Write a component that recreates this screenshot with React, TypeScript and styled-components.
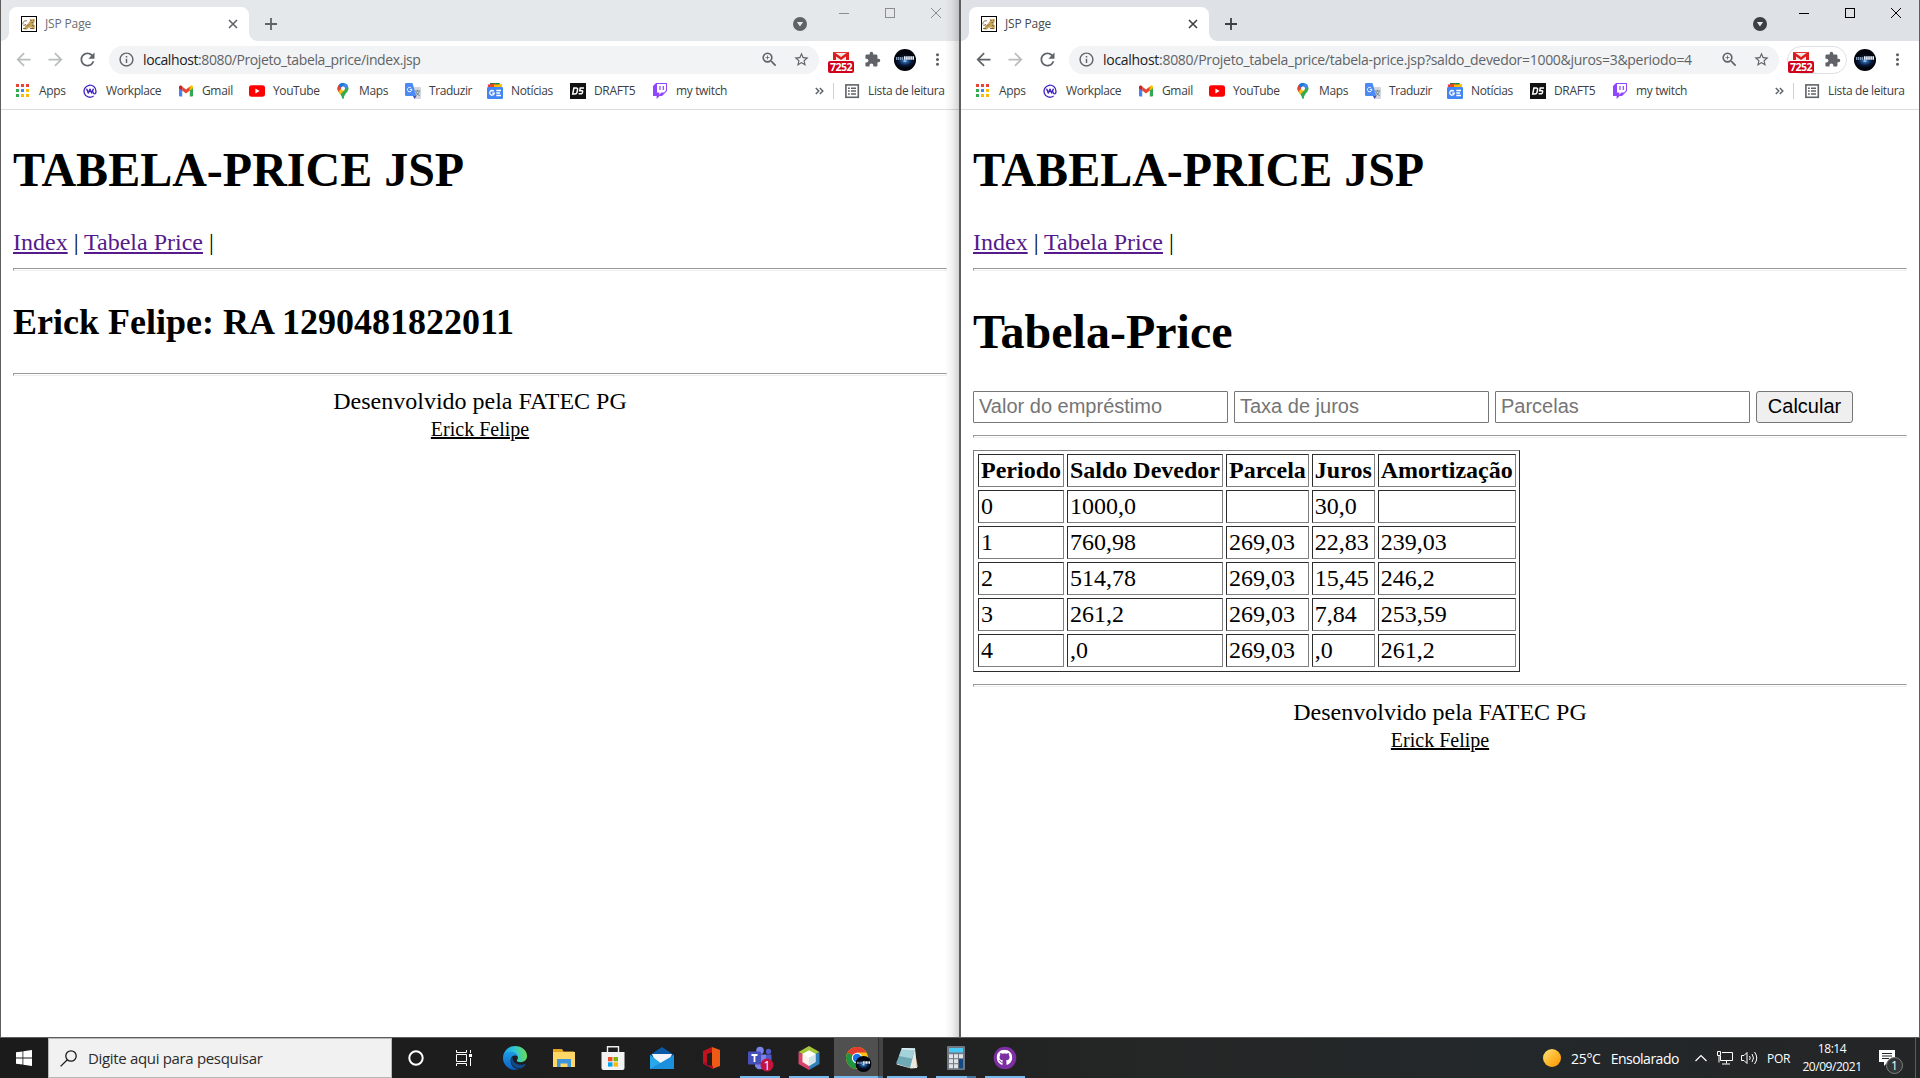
import React from 'react';
import styled, { createGlobalStyle } from 'styled-components';
import {
  MdArrowBack, MdArrowForward, MdRefresh, MdInfoOutline, MdZoomIn,
  MdStarBorder, MdExtension, MdMoreVert,
} from 'react-icons/md';
import { FaGithub } from 'react-icons/fa';

const Global = createGlobalStyle`
  * { box-sizing: border-box; }
  body { margin: 0; background: #fff; overflow: hidden; }
`;

const ui = `'Open Sans', 'Noto Sans', sans-serif`;

const Desktop = styled.div`
  width: 1920px;
  height: 1078px;
  display: grid;
  grid-template-rows: 1038px 40px;
  background: #1f1f1f;
`;
const Windows = styled.div`
  display: grid;
  grid-template-columns: 960px 960px;
`;
const Window = styled.section<{ $active: boolean }>`
  position: relative;
  display: flex;
  flex-direction: column;
  background: #fff;
  border: 1px solid #5e5e5e;
  border-top: 0;
  &::after {
    content: '';
    display: ${p => (p.$active ? 'none' : 'block')};
    position: absolute;
    top: 0;
    right: 0;
    width: 14px;
    height: 100%;
    background: linear-gradient(to right, rgba(0,0,0,0), rgba(0,0,0,.05) 50%, rgba(0,0,0,.17));
  }
`;

/* ---------- tab strip ---------- */
const TabStrip = styled.div<{ $active: boolean }>`
  display: flex;
  height: 41px;
  padding-left: 8px;
  background: ${p => (p.$active ? '#dee1e6' : '#e5e8eb')};
  color: ${p => (p.$active ? '#3c4043' : '#5f6368')};
`;
const Tab = styled.div`
  position: relative;
  display: flex;
  align-items: center;
  width: 240px;
  height: 34px;
  margin-top: 7px;
  padding: 0 8px 0 12px;
  border-radius: 8px 8px 0 0;
  background: #fff;
  &::before, &::after {
    content: '';
    position: absolute;
    bottom: 0;
    width: 8px;
    height: 8px;
  }
  &::before { left: -8px; background: radial-gradient(circle at 0 0, transparent 7.5px, #fff 8px); }
  &::after { right: -8px; background: radial-gradient(circle at 100% 0, transparent 7.5px, #fff 8px); }
`;
const TabTitle = styled.span<{ $active: boolean }>`
  flex: 1;
  margin-left: 8px;
  font: 12px/16px ${ui};
  letter-spacing: -0.15px;
  color: ${p => (p.$active ? '#45494d' : '#696d71')};
`;
const CloseBox = styled.span`
  display: flex;
  width: 16px;
  justify-content: center;
`;
const NewTab = styled.span`
  display: flex;
  align-items: center;
  justify-content: center;
  width: 28px;
  height: 34px;
  margin: 7px auto 0 8px;
`;
const SearchTabs = styled.span`
  margin: 17px 14px 0 0;
  width: 14px;
  height: 14px;
  svg { display: block; }
`;
const Caption = styled.div<{ $active: boolean }>`
  display: flex;
  height: 26px;
  color: ${p => (p.$active ? '#000' : '#8b8d8f')};
  svg { width: 46px; height: 26px; }
`;

/* ---------- toolbar ---------- */
const Toolbar = styled.div`
  display: flex;
  align-items: center;
  height: 37px;
  padding: 0 6px;
  color: #5f6368;
`;
const ToolButton = styled.span<{ $dim?: boolean }>`
  display: flex;
  align-items: center;
  justify-content: center;
  width: 32px;
  height: 28px;
  color: ${p => (p.$dim ? '#babcbe' : '#5f6368')};
  svg { flex: none; }
`;
const Omnibox = styled.div`
  display: flex;
  align-items: center;
  width: 710px;
  height: 28px;
  margin-left: 6px;
  padding: 0 2px 0 9px;
  border-radius: 14px;
  background: #f1f3f4;
`;
const Url = styled.span<{ $spacing: number }>`
  flex: 1;
  margin-left: 8px;
  font: 14px/20px ${ui};
  letter-spacing: ${p => p.$spacing}px;
  white-space: nowrap;
  color: #5f6368;
  b { font-weight: 400; color: #202124; }
`;
const Extensions = styled.div<{ $active: boolean }>`
  display: flex;
  align-items: center;
  gap: 4px;
  width: 60px;
  height: 28px;
  margin: 0 2px 0 8px;
  border: 1px solid ${p => (p.$active ? '#dfe1e5' : 'transparent')};
  border-radius: 14px;
`;
const MailExt = styled.span`
  display: flex;
  flex: none;
  flex-direction: column;
  align-items: center;
  gap: 1px;
  width: 26px;
  height: 22px;
  margin-top: 6px;
  svg { display: block; flex: none; }
`;
const Count = styled.span`
  width: 26px;
  height: 12px;
  border-radius: 2px;
  background: #d0021b;
  color: #fff;
  font: 700 10.5px/12px ${ui};
  letter-spacing: -0.5px;
  text-align: center;
`;

/* ---------- bookmarks ---------- */
const Bookmarks = styled.div`
  display: flex;
  height: 32px;
  padding: 5px 0 0 14px;
  border-bottom: 1px solid #dadce0;
`;
const Bookmark = styled.span<{ $w: number; $gap?: number }>`
  display: flex;
  align-items: center;
  width: ${p => p.$w}px;
  height: 16px;
  gap: ${p => p.$gap ?? 8}px;
  svg { flex: none; }
`;
const Label = styled.span<{ $s?: number }>`
  font: 12px/16px ${ui};
  letter-spacing: ${p => p.$s ?? -0.35}px;
  white-space: nowrap;
  color: #3c4043;
`;
const Divider = styled.span`
  width: 1px;
  height: 16px;
  margin-right: 10px;
  background: #cfd1d4;
`;

/* ---------- page ---------- */
const Page = styled.main`
  flex: 1;
  padding: 0 12px;
  font: 24px/27px 'Liberation Serif', 'Times New Roman', serif;
  color: #000;
`;
const H1 = styled.h1<{ $top?: number }>`
  margin: ${p => p.$top ?? 32}px 0 32px;
  font-size: 48px;
  line-height: 55px;
`;
const H2 = styled.h2`
  margin: 31px 0 30px;
  font-size: 36px;
  line-height: 41px;
`;
const Nav = styled.nav`
  a { color: #551a8b; text-decoration: underline; }
`;
const Rule = styled.hr`
  height: 3px;
  margin: 12px 0;
  border: 1px solid;
  border-color: #9a9a9a #eee #eee #9a9a9a;
`;
const Form = styled.form`
  display: flex;
  gap: 6px;
`;
const Field = styled.input`
  width: 255px;
  height: 32px;
  padding: 1px 4px 2px 5px;
  border: 1px solid #767676;
  border-radius: 1px;
  font: 20px 'Liberation Sans', Arial, sans-serif;
  &::placeholder { color: #757575; }
`;
const Submit = styled.button`
  width: 97px;
  height: 32px;
  padding: 0 0 1px;
  border: 1px solid #767676;
  border-radius: 3px;
  background: #efefef;
  color: #000;
  font: 20px 'Liberation Sans', Arial, sans-serif;
`;
const Table = styled.table`
  padding: 0 0 1px 1px;
  border: 1px solid;
  border-color: #808080 #2c2c2c #2c2c2c #808080;
  border-spacing: 3px;
  th, td {
    height: 33px;
    padding: 2px;
    border: 1px solid;
    border-color: #2c2c2c #808080 #808080 #2c2c2c;
    text-align: left;
  }
`;
const Footer = styled.footer`
  text-align: center;
`;
const Author = styled.div`
  font-size: 20px;
  line-height: 28px;
  text-decoration: underline;
`;

/* ---------- taskbar ---------- */
const Taskbar = styled.div`
  display: flex;
  background: linear-gradient(to right, #1b1b1b, #1f1f1f 45%, #252626 60%, #23282a 78%, #242526);
  color: #fff;
`;
const Start = styled.div`
  display: flex;
  align-items: center;
  justify-content: center;
  width: 48px;
`;
const Search = styled.div`
  display: flex;
  align-items: center;
  width: 344px;
  padding-left: 11px;
  border: 1px solid #b8b8b8;
  background: #f1f1f1;
`;
const SearchText = styled.span`
  margin-left: 11px;
  font: 15px/20px ${ui};
  letter-spacing: -0.33px;
  color: #2b2b2b;
`;
const SysButton = styled.div`
  display: flex;
  align-items: center;
  justify-content: center;
  width: 48px;
`;
const Apps = styled.div`
  display: flex;
  margin-left: 2.5px;
`;
const TaskApp = styled.div<{ $active?: boolean; $line?: 'one' | 'stack' | 'wide' }>`
  display: flex;
  flex-direction: column;
  align-items: center;
  width: 49px;
  padding-top: 8px;
  gap: 6px;
  background: ${p => (p.$active ? 'linear-gradient(to right, #505050 44px, #2f2f2f 44px, #2f2f2f 45px, #444 45px)' : 'none')};
  > svg { flex: none; display: block; overflow: visible; }
  &::after {
    content: '';
    width: ${p => (p.$line === 'wide' ? '49px' : '40px')};
    height: 2px;
    background: ${p => (!p.$line ? 'none' : p.$line === 'stack' ? 'linear-gradient(to right, #76b9ed 31px, #47759a 31px)' : p.$line === 'wide' ? 'linear-gradient(to right, #76b9ed 44px, #47759a 44px)' : '#76b9ed')};
  }
`;
const Tray = styled.div`
  display: flex;
  align-items: center;
  margin-left: auto;
`;
const Weather = styled.div`
  display: flex;
  align-items: center;
  width: 152px;
  gap: 10px;
`;
const TrayText = styled.span<{ $size?: number; $s?: number }>`
  padding-top: 1px;
  font: ${p => p.$size ?? 14}px/20px ${ui};
  letter-spacing: ${p => p.$s ?? 0}px;
  white-space: nowrap;
`;
const Sun = styled.span`
  width: 18px;
  height: 18px;
  border-radius: 50%;
  background: linear-gradient(135deg, #ffe680, #ffb92e 50%, #ff9300);
`;
const TrayIcon = styled.span<{ $w: number }>`
  display: flex;
  width: ${p => p.$w}px;
  svg { display: block; }
`;
const Clock = styled.div`
  width: 90px;
  text-align: center;
  font: 12px/18px ${ui};
  letter-spacing: -0.45px;
`;
const Notices = styled.div`
  width: 38px;
  padding-top: 4px;
  svg { display: block; }
`;
const ShowDesktop = styled.div`
  width: 5px;
  height: 40px;
  border-left: 1px solid #5b5d5e;
`;

/* ---------- drawings ---------- */
const Tomcat = () => (
  <svg width="16" height="16" viewBox="0 0 16 16">
    <rect x=".5" y=".5" width="15" height="15" fill="#fff" stroke="#000" />
    <path d="M3 13.500L4 10l3-2.500L9 5l-.3-2.500 1.300.8h2l1.500-.8.300 3L12.500 8l1.500 1.500-.5 3.500-2 .3-1-1.800-3 .2-1.500 1.800z" fill="#c9a45a" />
    <path d="M2 8.500C1.500 5.500 4 4 6 5M2.500 9.500L5 8.500M2 12.500h3M6 10.500l2-2M9.500 4.500h1M12 4.500h.8M10.500 6.500h1.500M9 12.500h4M11 9l2 1.500" stroke="#6c5a3a" strokeWidth=".9" fill="none" />
  </svg>
);
const AppsGrid = () => {
  const c = ['#ea4335', '#ea4335', '#ea4335', '#34a853', '#4285f4', '#fbbc04', '#34a853', '#fbbc04', '#fbbc04'];
  return (
    <svg width="16" height="16" viewBox="0 0 16 16" shapeRendering="crispEdges">
      {c.map((f, i) => <rect key={i} x={1 + (i % 3) * 5} y={1 + Math.floor(i / 3) * 5} width="3" height="3" fill={f} />)}
    </svg>
  );
};
const Workplace = () => (
  <svg width="16" height="16" viewBox="0 0 16 16" fill="none" stroke="#4326c4" strokeLinecap="round" strokeLinejoin="round">
    <path d="M11.200 13.300A6 6 0 1 1 14 8.200c0 1.800-.6 2.600-1.600 2.600s-1.200-1-1.700-2.300" strokeWidth="1.300" />
    <path d="M4.800 6.200l1.500 3.800L8 6.200l1.700 3.800 1.500-3.800" strokeWidth="1.500" />
  </svg>
);
const Gmail = () => (
  <svg width="16" height="16" viewBox="0 0 16 16">
    <path d="M1 4v8.500a1 1 0 0 0 1 1h2.200V7.200z" fill="#4285f4" />
    <path d="M15 4v8.500a1 1 0 0 1-1 1h-2.200V7.200z" fill="#34a853" />
    <path d="M11.800 3.600v4L15 5.200V4c0-1.400-1.500-2-2.500-1.200z" fill="#fbbc04" />
    <path d="M4.200 7.600V3.500L8 6.400l3.800-2.900v4.100L8 10.500z" fill="#ea4335" />
    <path d="M1 4v1.200l3.200 2.400v-4l-.7-.8C2.500 2 1 2.600 1 4z" fill="#c5221f" />
  </svg>
);
const YouTube = () => (
  <svg width="16" height="16" viewBox="0 0 16 16">
    <rect x="0" y="2.300" width="16" height="11.400" rx="2.600" fill="#f00" />
    <path d="M6.400 5.600v4.900l4.200-2.450z" fill="#fff" />
  </svg>
);
const Maps = () => (
  <svg width="16" height="16" viewBox="0 0 16 16">
    <path d="M8 0a5.500 5.500 0 0 1 5.500 5.500c0 3.500-4.200 5-4.800 10-.1.700-1.300.7-1.400 0C6.700 11.500 2.500 9 2.500 5.500A5.500 5.500 0 0 1 8 0z" fill="#34a853" />
    <path d="M3.800 2A5.500 5.500 0 0 0 3.500 8.700L8 3.500z" fill="#ea4335" />
    <path d="M3.800 2A5.500 5.500 0 0 1 9.700.3L6 5z" fill="#1a73e8" />
    <path d="M9.700.3a5.500 5.500 0 0 1 3.200 2.700L9.500 7 8 3.400z" fill="#4285f4" />
    <path d="M3.500 8.700l3-3.500L9.800 7l-4.600 4.500z" fill="#fbbc04" />
    <circle cx="8" cy="5.500" r="2" fill="#fff" />
  </svg>
);
const Translate = () => (
  <svg width="16" height="16" viewBox="0 0 16 16">
    <path d="M7 4h8a1 1 0 0 1 1 1v10a1 1 0 0 1-1 1H9.500z" fill="#d5d7da" />
    <path d="M10 8h5M12.500 6.800V8M11 8.500c.5 2 2 3.500 3.800 4M14.200 8.500c-.5 2-2 3.500-3.400 4" stroke="#607d8b" strokeWidth=".9" fill="none" />
    <path d="M8 13h3.500L9.500 16z" fill="#3a57b8" />
    <path d="M1 0h6.500l3.800 13H1a1 1 0 0 1-1-1V1a1 1 0 0 1 1-1z" fill="#4c8bf5" />
    <path d="M6.300 5.200a2.200 2.200 0 1 0 .5 1.400H4.800" stroke="#fff" strokeWidth="1" fill="none" />
  </svg>
);
const News = () => (
  <svg width="16" height="16" viewBox="0 0 16 16">
    <path d="M3 0h9.500l1 4H3z" fill="#188038" />
    <path d="M.8 1.500l8-1 1 4H1z" fill="#ea4335" />
    <path d="M7 1.800L15 .9 14.800 5H7z" fill="#fbbc04" />
    <rect x="0" y="4" width="16" height="12" rx="1.200" fill="#4285f4" />
    <path d="M6.800 8.300a2.300 2.300 0 1 0 .5 1.900H5.200M9.300 7.500H14M9.300 10H13M9.300 12.500H14" stroke="#fff" strokeWidth="1.300" fill="none" />
  </svg>
);
const Draft5 = () => (
  <svg width="16" height="16" viewBox="0 0 16 16">
    <rect width="16" height="16" fill="#121212" />
    <path d="M3.900 5h2.300q1.700 0 1.300 1.800l-.5 2.500Q6.600 11 4.900 11H2.700zM14 5h-3.700l-.6 2.800h2.400q.7 0 .5 1.100-.2 1.800-1 1.800H8.600" stroke="#fff" strokeWidth="1.500" fill="none" />
  </svg>
);
const Twitch = () => (
  <svg width="16" height="16" viewBox="0 0 16 16">
    <path d="M4 0L1 3v10h3.600v3l3-3H10l5-5V0z" fill="#9146ff" />
    <path d="M5 1h9v6.500L12 9.600H9.400L7.300 11.700V9.600H5z" fill="#fff" />
    <path d="M8 3v4M11.300 3v4" stroke="#9146ff" strokeWidth="1.200" />
  </svg>
);
const ReadingList = () => (
  <svg width="16" height="16" viewBox="0 0 16 16">
    <rect x="1.900" y="1.900" width="12.400" height="12.400" fill="none" stroke="#5f6368" strokeWidth="1.600" />
    <path d="M4 5.200h1.800M4 8h1.800M4 10.900h1.800M7 5.200h5M7 8h5M7 10.900h5" stroke="#5f6368" strokeWidth="1.500" />
  </svg>
);
const Chevrons = () => (
  <svg width="9" height="16" viewBox="0 0 9 16">
    <path d="M.8 5l3 3-3 3M4.800 5l3 3-3 3" fill="none" stroke="#5f6368" strokeWidth="1.500" />
  </svg>
);
const RedMail = () => (
  <svg width="16" height="8" viewBox="0 0 16 8">
    <rect width="16" height="8" fill="#f3e9e9" />
    <path d="M0 1h2.500L8 5l5.500-4H16v7h-3V4.500L8 8 3 4.500V8H0z" fill="#dd1c1c" />
    <path d="M0 0h16v1H0z" fill="#e23a3a" />
  </svg>
);
const Avatar = ({ size = 22 }: { size?: number }) => (
  <svg width={size} height={size} viewBox="0 0 22 22">
    <defs>
      <radialGradient id="glow">
        <stop offset="0" stopColor="#cfe9ff" /><stop offset=".22" stopColor="#2863a8" />
        <stop offset=".6" stopColor="#0a1c40" /><stop offset="1" stopColor="#02040b" />
      </radialGradient>
    </defs>
    <circle cx="11" cy="11" r="11" fill="#02040b" />
    <ellipse cx="11" cy="12" rx="10.500" ry="7" fill="url(#glow)" />
    <path d="M2 9.500h7" stroke="#7f96b5" strokeWidth="3" strokeDasharray="1.300 .6" />
    <path d="M10 9h10" stroke="#f0f6ff" strokeWidth="3.400" strokeDasharray="1.600 .5" />
  </svg>
);

const Edge = () => (
  <svg width="24" height="24" viewBox="0 0 24 24">
    <defs>
      <linearGradient id="e1" x1="0" y1=".5" x2="1" y2=".4"><stop offset="0" stopColor="#1b9de2" /><stop offset=".5" stopColor="#2fc4d8" /><stop offset="1" stopColor="#6be04c" /></linearGradient>
      <linearGradient id="e2" x1="0" y1="0" x2="0" y2="1"><stop offset="0" stopColor="#1e9ce6" /><stop offset="1" stopColor="#0d5fc0" /></linearGradient>
    </defs>
    <path d="M0 11C1 4 6 0 12 0c7 0 12 4.500 12 10 0 4-3 6.200-6.500 6.200-3 0-4.500-1.200-3.200-2.700 1.500-2 .2-5.500-4.300-5.500C5 6 1 8 0 11z" fill="url(#e1)" />
    <path d="M0 12C0 8 3.500 5.800 7.500 5.800c4 0 7 2 7.300 5C13 8.500 8 9 7.600 14c-.3 5 3.400 9.500 8.400 9C8 26 0 20 0 12z" fill="url(#e2)" />
    <path d="M9.500 10.500C6 13 8 22 16.500 22.500c3 0 5-2 6-4 .3-.6-.2-.9-.8-.6-5 2.500-12.700-.4-12.200-7.400z" fill="#114a8b" />
  </svg>
);
const Explorer = () => (
  <svg width="24" height="24" viewBox="0 0 24 24">
    <path d="M1 3h9l1.500 2.500H22V20H1z" fill="#e6a520" />
    <path d="M1 6h22v15H1z" fill="#ffd767" />
    <path d="M5 13h14v8h-3.500v-3.500h-7V21H5z" fill="#3c95dc" />
  </svg>
);
const Store = () => (
  <svg width="24" height="24" viewBox="0 0 24 24">
    <path d="M6.500 7V.8h11V7" fill="none" stroke="#eee" strokeWidth="1.400" />
    <path d="M.5 6h23v16a2 2 0 0 1-2 2h-19a2 2 0 0 1-2-2z" fill="#f3f3f3" />
    <rect x="7" y="11" width="4.500" height="4.300" fill="#f25022" /><rect x="12.500" y="11" width="4.500" height="4.300" fill="#7fba00" />
    <rect x="7" y="16.300" width="4.500" height="4.300" fill="#00a4ef" /><rect x="12.500" y="16.300" width="4.500" height="4.300" fill="#ffb900" />
  </svg>
);
const Mail = () => (
  <svg width="24" height="24" viewBox="0 0 24 24">
    <path d="M0 9L12 1l12 8v3H0z" fill="#0a5aa8" />
    <path d="M2 8h20l-4 9H6z" fill="#f2f6fb" />
    <path d="M0 9l12 9L24 9v14H0z" fill="#28a8ea" />
    <path d="M0 23L24 9v14z" fill="#1c8fdd" />
  </svg>
);
const Office = () => (
  <svg width="24" height="24" viewBox="0 0 24 24">
    <path d="M13 1L4 5v13l4-2V8l6-2z" fill="#c1121f" />
    <path d="M13 1l8 3v16l-8 3z" fill="#ef5a14" />
    <path d="M8 19l6 1v3L4 18l4-2z" fill="#a90f2b" />
  </svg>
);
const Teams = () => (
  <svg width="28" height="24" viewBox="0 0 28 24">
    <circle cx="14" cy="4.500" r="3.800" fill="#7b83eb" /><circle cx="22.500" cy="5.500" r="2.700" fill="#5059c9" />
    <path d="M9 8.500h11v9a6 6 0 0 1-11 3z" fill="#7b83eb" /><path d="M20 8.500h5.500v7.500a4 4 0 0 1-5.500 3z" fill="#5059c9" />
    <rect x="2" y="5.500" width="13" height="13" rx="1" fill="#4650b8" />
    <path d="M5.500 9h6M8.500 9v7" stroke="#fff" strokeWidth="1.800" />
    <circle cx="21" cy="19" r="6.500" fill="#c4143c" />
    <text x="21" y="23.500" textAnchor="middle" fontFamily="Open Sans, sans-serif" fontSize="12" fill="#fff">1</text>
  </svg>
);
const NetBeans = () => (
  <svg width="24" height="24" viewBox="0 0 24 24">
    <path d="M12 0l10.500 6L12 12 1.500 6z" fill="#a5c73b" />
    <path d="M1.500 6L12 12v12L1.500 18z" fill="#d8456b" /><path d="M22.500 6L12 12v12l10.500-6z" fill="#2f7fb8" />
    <path d="M12 4.500l6.500 3.500v8L12 20l-6.500-4V8z" fill="#f6f6ee" />
    <path d="M12 11.500V20l6.500-4V8z" fill="#d5e4ea" /><path d="M12 4.500l6.500 3.500-6.500 3.500L5.500 8z" fill="#fff" />
  </svg>
);
const Chrome = () => (
  <svg width="26" height="24" viewBox="0 0 26 24">
    <circle cx="12" cy="12" r="11" fill="#fbc116" />
    <path d="M12 12L2.500 6.500A11 11 0 0 1 21.500 6.500H12z" fill="#e33b2e" />
    <path d="M12 12L2.500 6.500a11 11 0 0 0 8.500 16.500l4-7z" fill="#229342" />
    <circle cx="12" cy="12" r="5.200" fill="#fff" /><circle cx="12" cy="12" r="4.200" fill="#1a73e8" />
    <g transform="translate(10.500 10)"><Avatar size={16} /></g>
  </svg>
);
const Notepad = () => (
  <svg width="24" height="24" viewBox="0 0 24 24">
    <path d="M19 3l4 18-4 1z" fill="#b08d57" /><path d="M1.500 18.500L16 22.500l6-.5L20 2z" fill="#e8e8e0" />
    <path d="M7 2l13 .5L15 22 1 17.500z" fill="#6fa9b5" /><path d="M7 2l13 .5-3 10L4 10z" fill="#a5d3dc" /><path d="M7 2l13 .5-.4 1.500L6.500 3.300z" fill="#e6f4f5" />
  </svg>
);
const Calculator = () => (
  <svg width="24" height="24" viewBox="0 0 24 24">
    <rect x="3" y="0" width="18" height="24" rx="1" fill="#6f7780" /><rect x="5" y="2" width="14" height="4.500" fill="#4cc8f4" />
    {[0, 1, 2].map(r => [0, 1, 2].map(c => (
      <rect key={`${r}${c}`} x={5 + c * 5} y={8.200 + r * 5} width="4" height="4" fill={c === 2 && r > 0 ? '#134a86' : '#dfe3e8'} />
    )))}
    <rect x="15" y="13.200" width="4" height="9" fill="#134a86" />
  </svg>
);
const GitHub = () => (
  <svg width="24" height="24" viewBox="0 0 24 24">
    <circle cx="12" cy="12" r="11.300" fill="#7b2fa3" />
    <FaGithub x="3.500" y="3.500" width="17" height="17" color="#fff" />
  </svg>
);

/* ---------- composition ---------- */
const bookmarks: { icon: React.ReactNode; label: string; w: number; gap?: number; s?: number }[] = [
  { icon: <AppsGrid />, label: 'Apps', w: 67 },
  { icon: <Workplace />, label: 'Workplace', w: 96, s: -0.45 },
  { icon: <Gmail />, label: 'Gmail', w: 71 },
  { icon: <YouTube />, label: 'YouTube', w: 86, s: -0.4 },
  { icon: <Maps />, label: 'Maps', w: 70 },
  { icon: <Translate />, label: 'Traduzir', w: 82, s: -0.42 },
  { icon: <News />, label: 'Notícias', w: 83 },
  { icon: <Draft5 />, label: 'DRAFT5', w: 82 },
  { icon: <Twitch />, label: 'my twitch', w: 163 },
];

function BrowserWindow({ active, path, spacing, children }: {
  active: boolean; path: string; spacing: number; children: React.ReactNode;
}) {
  return (
    <Window $active={active}>
      <TabStrip $active={active}>
        <Tab>
          <Tomcat />
          <TabTitle $active={active}>JSP Page</TabTitle>
          <CloseBox>
            <svg width="10" height="10" viewBox="0 0 10 10"><path d="M1 1l8 8M9 1L1 9" stroke="currentColor" strokeWidth="1.600" /></svg>
          </CloseBox>
        </Tab>
        <NewTab>
          <svg width="12" height="12" viewBox="0 0 12 12"><path d="M6 0v12M0 6h12" stroke="currentColor" strokeWidth="1.800" /></svg>
        </NewTab>
        <SearchTabs>
          <svg width="14" height="14" viewBox="0 0 14 14"><circle cx="7" cy="7" r="7" fill="currentColor" /><path d="M3.900 5h6.200L7 9.600z" fill="#e8eaed" /></svg>
        </SearchTabs>
        <Caption $active={active}>
          <svg viewBox="0 0 46 26"><path d="M18 13.500h10" stroke="currentColor" /></svg>
          <svg viewBox="0 0 46 26"><rect x="18.500" y="8.500" width="9" height="9" fill="none" stroke="currentColor" /></svg>
          <svg viewBox="0 0 46 26"><path d="M18 8l10 10M28 8L18 18" stroke="currentColor" /></svg>
        </Caption>
      </TabStrip>
      <Toolbar>
        <ToolButton $dim={!active}><MdArrowBack size={21} /></ToolButton>
        <ToolButton $dim><MdArrowForward size={21} /></ToolButton>
        <ToolButton><MdRefresh size={21} /></ToolButton>
        <Omnibox>
          <MdInfoOutline size={17} />
          <Url $spacing={spacing}><b>localhost</b>:8080/Projeto_tabela_price/{path}</Url>
          <ToolButton><MdZoomIn size={19} /></ToolButton>
          <ToolButton><MdStarBorder size={17} /></ToolButton>
        </Omnibox>
        <Extensions $active={active}>
          <MailExt><RedMail /><Count>7252</Count></MailExt>
          <ToolButton><MdExtension size={17} /></ToolButton>
        </Extensions>
        <ToolButton><Avatar /></ToolButton>
        <ToolButton><MdMoreVert size={19} /></ToolButton>
      </Toolbar>
      <Bookmarks>
        {bookmarks.map(b => (
          <Bookmark key={b.label} $w={b.w} $gap={b.gap}>{b.icon}<Label $s={b.s}>{b.label}</Label></Bookmark>
        ))}
        <Bookmark $w={18}><Chevrons /></Bookmark>
        <Divider />
        <Bookmark $w={110}><ReadingList /><Label>Lista de leitura</Label></Bookmark>
      </Bookmarks>
      <Page>
        <H1>TABELA-PRICE JSP</H1>
        <Nav><a>Index</a> | <a>Tabela Price</a> |</Nav>
        <Rule />
        {children}
        <Rule />
        <Footer>
          Desenvolvido pela FATEC PG
          <Author>Erick Felipe</Author>
        </Footer>
      </Page>
    </Window>
  );
}

const head = ['Periodo', 'Saldo Devedor', 'Parcela', 'Juros', 'Amortização'];
const rows = [
  ['0', '1000,0', '', '30,0', ''],
  ['1', '760,98', '269,03', '22,83', '239,03'],
  ['2', '514,78', '269,03', '15,45', '246,2'],
  ['3', '261,2', '269,03', '7,84', '253,59'],
  ['4', ',0', '269,03', ',0', '261,2'],
];

export default function App() {
  return (
    <Desktop>
      <Global />
      <Windows>
        <BrowserWindow active={false} path="index.jsp" spacing={-0.4}>
          <H2>Erick Felipe: RA 1290481822011</H2>
        </BrowserWindow>
        <BrowserWindow active path="tabela-price.jsp?saldo_devedor=1000&juros=3&periodo=4" spacing={-0.29}>
          <H1 $top={33}>Tabela-Price</H1>
          <Form>
            <Field placeholder="Valor do empréstimo" />
            <Field placeholder="Taxa de juros" />
            <Field placeholder="Parcelas" />
            <Submit type="button">Calcular</Submit>
          </Form>
          <Rule />
          <Table>
            <thead><tr>{head.map(h => <th key={h}>{h}</th>)}</tr></thead>
            <tbody>
              {rows.map(r => <tr key={r[0]}>{r.map((c, i) => <td key={i}>{c}</td>)}</tr>)}
            </tbody>
          </Table>
        </BrowserWindow>
      </Windows>
      <Taskbar>
        <Start>
          <svg width="16" height="16" viewBox="0 0 16 16" fill="#fff"><path d="M0 2.300L6.500 1.400v6.200H0zM7.300 1.300L16 0v7.600H7.300zM0 8.400h6.500v6.200L0 13.700zM7.300 8.400H16V16l-8.700-1.300z" /></svg>
        </Start>
        <Search>
          <svg width="17" height="17" viewBox="0 0 17 17" fill="none" stroke="#1b1b1b" strokeWidth="1.300"><circle cx="11" cy="6" r="5.200" /><path d="M7.300 9.700L.6 16.400" /></svg>
          <SearchText>Digite aqui para pesquisar</SearchText>
        </Search>
        <SysButton>
          <svg width="16" height="16" viewBox="0 0 16 16"><circle cx="8" cy="8" r="6.700" fill="none" stroke="#fff" strokeWidth="2" /></svg>
        </SysButton>
        <SysButton>
          <svg width="16" height="16" viewBox="0 0 16 16" fill="none" stroke="#fff"><path d="M.5 0v2.500h10V0M.5 16v-2.500h10V16M.5 4.500h10v7H.5zM14.500 0v3M14.500 8v8" /><rect x="13" y="4" width="3" height="3" fill="#fff" stroke="none" /></svg>
        </SysButton>
        <Apps>
          <TaskApp><Edge /></TaskApp>
          <TaskApp><Explorer /></TaskApp>
          <TaskApp><Store /></TaskApp>
          <TaskApp><Mail /></TaskApp>
          <TaskApp><Office /></TaskApp>
          <TaskApp $line="one"><Teams /></TaskApp>
          <TaskApp $line="one"><NetBeans /></TaskApp>
          <TaskApp $line="wide" $active><Chrome /></TaskApp>
          <TaskApp $line="one"><Notepad /></TaskApp>
          <TaskApp $line="stack"><Calculator /></TaskApp>
          <TaskApp $line="one"><GitHub /></TaskApp>
        </Apps>
        <Tray>
          <Weather>
            <Sun />
            <TrayText $s={-0.3}>25°C</TrayText>
            <TrayText $s={-0.5}>Ensolarado</TrayText>
          </Weather>
          <TrayIcon $w={22}>
            <svg width="12" height="8" viewBox="0 0 12 8"><path d="M.5 7L6 1.500 11.500 7" fill="none" stroke="#fff" strokeWidth="1.200" /></svg>
          </TrayIcon>
          <TrayIcon $w={24}>
            <svg width="16" height="14" viewBox="0 0 16 14" fill="none" stroke="#fff"><path d="M5 1.500h10.500v8H3.500V5M9.500 9.500v3M5 13h8M.5.5h3v4h-3zM2 4.500v7" /></svg>
          </TrayIcon>
          <TrayIcon $w={26}>
            <svg width="17" height="14" viewBox="0 0 17 14" fill="none" stroke="#fff"><path d="M.5 4.500h2.500l3-3v11l-3-3H.5zM8.500 5q1.500 2 0 4M11 3q3 4 0 8M13.500 1q4.500 6 0 12" /></svg>
          </TrayIcon>
          <TrayIcon $w={20}><TrayText $size={12} $s={-0.3}>POR</TrayText></TrayIcon>
          <Clock>18:14<br />20/09/2021</Clock>
          <Notices>
            <svg width="28" height="28" viewBox="0 0 28 28">
              <path d="M2 4h16v12H11l-4 4v-4H2z" fill="#fff" /><path d="M5 7.500h10M5 10h10M5 12.500h7" stroke="#242526" strokeWidth="1" />
              <circle cx="17.500" cy="19.500" r="8" fill="#333536" stroke="#7d7f80" />
              <text x="17.500" y="24" textAnchor="middle" fontFamily="Open Sans, sans-serif" fontSize="12" fill="#fff">1</text>
            </svg>
          </Notices>
          <ShowDesktop />
        </Tray>
      </Taskbar>
    </Desktop>
  );
}
